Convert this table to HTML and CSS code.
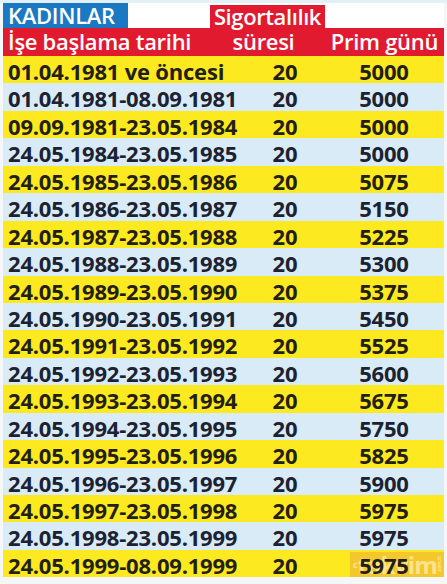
FILE: index.html
```html
<!DOCTYPE html>
<html lang="tr">
<head>
<meta charset="utf-8">
<link rel="stylesheet" href="styles.css">
</head>
<body>
<div class="page">
  <div class="top">
    <div class="tag">KADINLAR</div>
    <div class="sig">Sigortalılık</div>
  </div>
  <div class="head">
    <div class="h1">İşe başlama tarihi</div>
    <div class="h2">süresi</div>
    <div class="h3">Prim günü</div>
  </div>
  <div class="rows">
    <div class="row y"><span class="c1">01.04.1981 ve öncesi</span><span class="c2">20</span><span class="c3">5000</span></div>
    <div class="row b"><span class="c1">01.04.1981-08.09.1981</span><span class="c2">20</span><span class="c3">5000</span></div>
    <div class="row y"><span class="c1">09.09.1981-23.05.1984</span><span class="c2">20</span><span class="c3">5000</span></div>
    <div class="row b"><span class="c1">24.05.1984-23.05.1985</span><span class="c2">20</span><span class="c3">5000</span></div>
    <div class="row y"><span class="c1">24.05.1985-23.05.1986</span><span class="c2">20</span><span class="c3">5075</span></div>
    <div class="row b"><span class="c1">24.05.1986-23.05.1987</span><span class="c2">20</span><span class="c3">5150</span></div>
    <div class="row y"><span class="c1">24.05.1987-23.05.1988</span><span class="c2">20</span><span class="c3">5225</span></div>
    <div class="row b"><span class="c1">24.05.1988-23.05.1989</span><span class="c2">20</span><span class="c3">5300</span></div>
    <div class="row y"><span class="c1">24.05.1989-23.05.1990</span><span class="c2">20</span><span class="c3">5375</span></div>
    <div class="row b"><span class="c1">24.05.1990-23.05.1991</span><span class="c2">20</span><span class="c3">5450</span></div>
    <div class="row y"><span class="c1">24.05.1991-23.05.1992</span><span class="c2">20</span><span class="c3">5525</span></div>
    <div class="row b"><span class="c1">24.05.1992-23.05.1993</span><span class="c2">20</span><span class="c3">5600</span></div>
    <div class="row y"><span class="c1">24.05.1993-23.05.1994</span><span class="c2">20</span><span class="c3">5675</span></div>
    <div class="row b"><span class="c1">24.05.1994-23.05.1995</span><span class="c2">20</span><span class="c3">5750</span></div>
    <div class="row y"><span class="c1">24.05.1995-23.05.1996</span><span class="c2">20</span><span class="c3">5825</span></div>
    <div class="row b"><span class="c1">24.05.1996-23.05.1997</span><span class="c2">20</span><span class="c3">5900</span></div>
    <div class="row y"><span class="c1">24.05.1997-23.05.1998</span><span class="c2">20</span><span class="c3">5975</span></div>
    <div class="row b"><span class="c1">24.05.1998-23.05.1999</span><span class="c2">20</span><span class="c3">5975</span></div>
    <div class="row y last"><span class="c1">24.05.1999-08.09.1999</span><span class="c2">20</span><span class="c3">5975</span>
      <div class="mark"><span class="mc">c</span><span class="mw">takvim</span><span class="mt">.com.tr</span></div>
    </div>
  </div>
</div>
</body>
</html>
```
FILE: styles.css
```css
html, body {
  margin: 0;
  padding: 0;
  background: #f4f6f7;
}
.page {
  width: 447px;
  height: 584px;
  box-sizing: border-box;
  padding: 3px 3px 0 3px;
  background: linear-gradient(#e4f0f7 0, #e4f0f7 3px, #f4f6f7 3px);
  font-family: "Open Sans", "Noto Sans", sans-serif;
}
.top {
  display: flex;
  height: 25px;
  background: #ffffff;
  align-items: flex-end;
}
.tag {
  width: 125px;
  height: 25px;
  box-sizing: border-box;
  background: #1b78c2;
  color: #fff;
  font-size: 22px;
  font-weight: 600;
  line-height: 25px;
  padding-left: 5px;
  letter-spacing: -0.3px;
}
.sig {
  margin-left: 82px;
  width: 115px;
  height: 23px;
  background: #e11a30;
  color: #fff;
  font-size: 22px;
  font-weight: 600;
  line-height: 23px;
  text-align: center;
  letter-spacing: -0.4px;
}
.head {
  display: grid;
  grid-template-columns: 207px 115px 1fr;
  height: 28px;
  background: #e11a30;
  color: #fff;
  font-size: 22px;
  font-weight: 600;
  line-height: 27px;
  letter-spacing: -0.3px;
}
.h1 { padding-left: 5px; white-space: nowrap; }
.h2 { text-align: center; padding-right: 8px; }
.h3 { text-align: center; white-space: nowrap; }
.rows {
  display: flex;
  flex-direction: column;
}
.row {
  display: grid;
  grid-template-columns: 232px 100px 98px 1fr;
  height: 27.45px;
  align-items: center;
  font-size: 22px;
  font-weight: 700;
  letter-spacing: -0.2px;
  color: #1c2231;
}
.row.y { background: #fde91f; color: #231f14; }
.row.b { background: #d8ebf6; }
.c1 { padding-left: 5px; white-space: nowrap; }
.c2, .c3 { text-align: center; }
.row > span { position: relative; z-index: 1; }
.last { position: relative; }
.mark {
  position: absolute;
  z-index: 0;
  left: 347px;
  top: 2px;
  width: 94px;
  height: 25px;
  display: flex;
  align-items: center;
  background: rgba(226, 140, 70, 0.35);
  color: rgba(255, 236, 170, 0.8);
  font-weight: 700;
  box-sizing: border-box;
  padding-left: 3px;
  white-space: nowrap;
}
.mc {
  font-size: 9px;
  line-height: 9px;
}
.mw {
  font-size: 24px;
  line-height: 25px;
  letter-spacing: -0.8px;
}
.mt {
  font-size: 5px;
  line-height: 5px;
  width: 5px;
  writing-mode: vertical-rl;
  transform: rotate(180deg);
}
```
